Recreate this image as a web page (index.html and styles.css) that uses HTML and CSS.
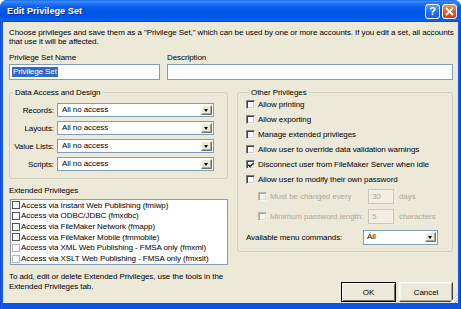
FILE: index.html
```html
<!DOCTYPE html>
<html>
<head>
<meta charset="utf-8">
<title>Edit Privilege Set</title>
<link rel="stylesheet" href="styles.css">
</head>
<body>
<div class="window">
  <div class="titlebar">
    <span class="title">Edit Privilege Set</span>
    <div class="caption-buttons">
      <span class="cbtn help">?</span>
      <span class="cbtn close"><svg width="9" height="9" viewBox="0 0 9 9"><path d="M1 1L8 8M8 1L1 8" stroke="#fff" stroke-width="1.8" fill="none"/></svg></span>
    </div>
  </div>
  <div class="client">
    <p class="intro">Choose privileges and save them as a "Privilege Set," which can be used by one or more accounts. If you edit a set, all accounts<br>that use it will be affected.</p>
    <div class="names">
      <div class="field">
        <span class="flabel">Privilege Set Name</span>
        <div class="input"><span class="selected">Privilege Set</span></div>
      </div>
      <div class="field">
        <span class="flabel">Description</span>
        <div class="input"></div>
      </div>
    </div>
    <div class="main">
      <div class="col-left">
        <div class="group data">
          <span class="group-title">Data Access and Design</span>
          <div class="rows">
            <span class="lbl">Records:</span><div class="select"><span class="val">All no access</span><span class="arrow"></span></div>
            <span class="lbl">Layouts:</span><div class="select"><span class="val">All no access</span><span class="arrow"></span></div>
            <span class="lbl">Value Lists:</span><div class="select"><span class="val">All no access</span><span class="arrow"></span></div>
            <span class="lbl">Scripts:</span><div class="select"><span class="val">All no access</span><span class="arrow"></span></div>
          </div>
        </div>
        <div class="ext-label">Extended Privileges</div>
        <div class="listbox">
          <div class="item"><span class="lcb"></span>Access via Instant Web Publishing (fmiwp)</div>
          <div class="item"><span class="lcb"></span>Access via ODBC/JDBC (fmxdbc)</div>
          <div class="item"><span class="lcb"></span>Access via FileMaker Network (fmapp)</div>
          <div class="item"><span class="lcb"></span>Access via FileMaker Mobile (fmmobile)</div>
          <div class="item"><span class="lcb off"></span>Access via XML Web Publishing - FMSA only (fmxml)</div>
          <div class="item"><span class="lcb off"></span>Access via XSLT Web Publishing - FMSA only (fmxslt)</div>
        </div>
        <p class="note">To add, edit or delete Extended Privileges, use the tools in the<br>Extended Privileges tab.</p>
      </div>
      <div class="col-right">
        <div class="group other">
          <span class="group-title">Other Privileges</span>
          <div class="checks">
            <div class="check"><span class="cb"></span>Allow printing</div>
            <div class="check"><span class="cb"></span>Allow exporting</div>
            <div class="check"><span class="cb"></span>Manage extended privileges</div>
            <div class="check"><span class="cb"></span>Allow user to override data validation warnings</div>
            <div class="check"><span class="cb"><svg width="6" height="6" viewBox="0 0 6 6"><path d="M0.3 2.6L2.2 4.6L5.7 0.9" stroke="#111" stroke-width="1.4" fill="none"/></svg></span>Disconnect user from FileMaker Server when idle</div>
            <div class="check"><span class="cb"></span>Allow user to modify their own password</div>
          </div>
          <div class="sub first">
            <div class="check disabled"><span class="cb"></span>Must be changed every</div>
            <span class="tbox">30</span>
            <span class="unit">days</span>
          </div>
          <div class="sub second">
            <div class="check disabled"><span class="cb"></span>Minimum password length:</div>
            <span class="tbox">5</span>
            <span class="unit">characters</span>
          </div>
          <div class="menu-row">
            <span>Available menu commands:</span>
            <div class="select small"><span class="val">All</span><span class="arrow"></span></div>
          </div>
        </div>
        <div class="buttons">
          <button class="btn default">OK</button>
          <button class="btn cancel">Cancel</button>
        </div>
      </div>
    </div>
    <span class="grip"></span>
  </div>
</div>
</body>
</html>
```
FILE: styles.css
```css
* { box-sizing: border-box; margin: 0; padding: 0; }
html, body { width: 461px; height: 309px; overflow: hidden; background: #ffffff; }
body {
  font-family: "Liberation Sans", Arial, sans-serif;
  font-size: 8px;
  line-height: 9px;
  color: #000;
  letter-spacing: -0.08px;
  white-space: nowrap;
}
.window {
  width: 461px;
  height: 309px;
  display: flex;
  flex-direction: column;
  background: linear-gradient(to right, #0831C8 0px, #1C63EC 1px, #0A55E4 3px, #0A55E4 458px, #1A5FE6 459px, #062EB8 461px);
  border-radius: 7px 7px 0 0;
}
.titlebar {
  height: 22px;
  flex: none;
  display: flex;
  align-items: center;
  justify-content: space-between;
  padding: 0 4px 0 7px;
  border-radius: 7px 7px 0 0;
  background: linear-gradient(to bottom, #0A5BEA 0px, #3D8FF8 1px, #2A7BF6 3px, #0A5EEE 7px, #0055E6 12px, #0058EA 17px, #0A63F2 20px, #0547D6 22px);
}
.title {
  color: #fff;
  font-weight: bold;
  font-size: 9.2px;
  letter-spacing: 0;
  text-shadow: 1px 1px 0 #0A2A8A;
  margin-top: 1px;
}
.caption-buttons { display: flex; gap: 2px; margin-top: 1px; }
.cbtn {
  width: 15px;
  height: 15px;
  border: 1px solid #fff;
  border-radius: 3px;
  display: flex;
  align-items: center;
  justify-content: center;
  color: #fff;
}
.help {
  background: linear-gradient(to bottom, #5E9BFB, #2469EC 60%, #1E5EE0);
  font: bold 11px/1 "Liberation Sans", Arial, sans-serif;
}
.close {
  background: linear-gradient(to bottom, #EE9775, #DD5A30 50%, #C94118);
}
.client {
  flex: 1;
  margin: 0 3px 6px 3px;
  background: #ECE9D8;
  padding: 6px 6px 1px 6px;
  display: flex;
  flex-direction: column;
  position: relative;
}
.intro { line-height: 9px; }
.names {
  display: grid;
  grid-template-columns: 151px 286px;
  column-gap: 7px;
  margin-top: 7px;
}
.field { display: flex; flex-direction: column; gap: 2px; }
.input {
  height: 16px;
  background: #fff;
  border: 1px solid #7F9DB9;
  padding: 2px 0 0 2px;
  line-height: 10px;
}
.selected { background: #316AC5; color: #fff; padding: 0 1px; display: inline-block; height: 10px; }
.main {
  flex: 1;
  display: grid;
  grid-template-columns: 219px 216px;
  column-gap: 9px;
  margin-top: 12px;
}
.col-left, .col-right { display: flex; flex-direction: column; }
.group {
  border: 1px solid #D0D0BF;
  border-radius: 3px;
}
.group-title {
  display: block;
  width: max-content;
  margin: -5px 0 0 3px;
  padding: 0 2px;
  background: #ECE9D8;
  line-height: 9px;
}
.data { padding-bottom: 7px; }
.rows {
  display: grid;
  grid-template-columns: 44px 157px;
  column-gap: 3px;
  row-gap: 4px;
  margin-top: 6px;
  align-items: center;
}
.lbl { text-align: right; }
.select {
  height: 14px;
  background: #fff;
  border: 1px solid #7F9DB9;
  display: flex;
  align-items: flex-start;
  padding: 1px 1px 0 4px;
}
.select .val { flex: 1; line-height: 10px; }
.arrow {
  width: 11px;
  height: 10px;
  background: #ECE9D8;
  border: 1px solid;
  border-color: #fff #716F64 #716F64 #fff;
  box-shadow: inset -1px -1px 0 #ACA899;
  position: relative;
}
.arrow::after {
  content: "";
  position: absolute;
  left: 2px;
  top: 3px;
  border-left: 2.5px solid transparent;
  border-right: 2.5px solid transparent;
  border-top: 3px solid #000;
}
.ext-label { margin-top: 7px; }
.listbox {
  margin: 4px 0 0 1px;
  width: 218px;
  height: 66px;
  background: #fff;
  border: 1px solid #7F9DB9;
  display: grid;
  grid-template-rows: repeat(6, 1fr);
  padding-left: 1px;
}
.item { display: flex; align-items: center; gap: 1px; }
.lcb { width: 8px; height: 8px; border: 1px solid #555; background: #fff; }
.lcb.off { border-color: #B5B5B5; }
.note { margin-top: 7px; line-height: 10px; }
.other { padding: 0 0 6px 8px; }
.checks { display: flex; flex-direction: column; }
.check { height: 15px; display: flex; align-items: center; gap: 3px; }
.cb {
  width: 9px;
  height: 9px;
  flex: none;
  border: 1px solid;
  border-color: #808080 #F4F3EE #F4F3EE #808080;
  box-shadow: inset 1px 1px 0 #404040, inset -1px -1px 0 #D4D0C8;
  background: #fff;
  display: flex;
  align-items: center;
  justify-content: center;
}
.check.disabled { color: #ACA899; }
.check.disabled .cb {
  border-color: #BDBAAA #F4F3EE #F4F3EE #BDBAAA;
  box-shadow: inset 1px 1px 0 #A8A698, inset -1px -1px 0 #E0DED2;
  background: #F4F3EE;
}
.sub {
  display: grid;
  grid-template-columns: 105px 26px auto;
  column-gap: 5px;
  align-items: center;
  margin-left: 12px;
  height: 15px;
}
.sub.first { margin-top: 2px; }
.sub.second { margin-top: 5px; }
.tbox {
  height: 15px;
  border: 1px solid #C9C7BA;
  background: #F1EFE2;
  color: #ACA899;
  padding: 2px 0 0 3px;
}
.unit { color: #ACA899; }
.menu-row {
  display: grid;
  grid-template-columns: 117px 75px;
  align-items: center;
  margin-top: 6px;
  height: 15px;
}
.select.small { height: 15px; padding-left: 3px; }
.buttons {
  margin-top: auto;
  display: flex;
  justify-content: flex-end;
  gap: 3px;
}
.btn {
  font: inherit;
  letter-spacing: inherit;
  height: 20px;
  width: 55px;
  background: #ECE9D8;
  color: #000;
}
.btn.default {
  border: 1px solid #000;
  box-shadow: inset 1px 1px 0 #fff, inset -1px -1px 0 #716F64;
}
.btn.cancel {
  width: 54px;
  border: 1px solid;
  border-color: #fff #404040 #404040 #fff;
  box-shadow: inset -1px -1px 0 #ACA899, inset 1px 1px 0 #F5F4EE;
}
.grip {
  position: absolute;
  right: 0;
  bottom: 0;
  width: 9px;
  height: 9px;
  background: repeating-linear-gradient(135deg, transparent 0 2px, #ACA899 2px 3px, #fff 3px 4px);
  clip-path: polygon(100% 0, 100% 100%, 0 100%);
}
```
